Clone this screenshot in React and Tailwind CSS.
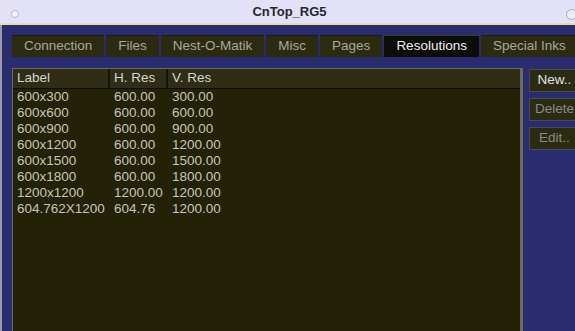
import React from "react";

const tabs = ["Connection", "Files", "Nest-O-Matik", "Misc", "Pages", "Resolutions", "Special Inks"];
const rows = [
  ["600x300", "600.00", "300.00"],
  ["600x600", "600.00", "600.00"],
  ["600x900", "600.00", "900.00"],
  ["600x1200", "600.00", "1200.00"],
  ["600x1500", "600.00", "1500.00"],
  ["600x1800", "600.00", "1800.00"],
  ["1200x1200", "1200.00", "1200.00"],
  ["604.762X1200", "604.76", "1200.00"],
];

export default function App() {
  return (
    <div
      className="w-[575px] h-[331px] overflow-hidden flex flex-col bg-[#2b2c6e]"
      style={{ fontFamily: '"Liberation Sans", Arial, sans-serif' }}
    >
      {/* title bar */}
      <div className="relative h-[23px] shrink-0 bg-[#e3e1f7] flex items-center justify-center">
        <div className="absolute left-[11px] top-[10px] w-[8px] h-[8px] rounded-full bg-[#f4f4f8] border border-[#b8b8c8]" />
        <span className="text-[13px] font-bold text-[#26262e] pl-[4px]">CnTop_RG5</span>
        <div className="absolute left-[566px] top-[9px] w-[11px] h-[11px] rounded-full bg-[#ececf4] border border-[#a8a8b8]" />
      </div>
      <div className="h-[2px] shrink-0 bg-[#e2deb0]" />
      <div className="flex-1 flex border-l-2 border-[#9a9aaa] min-h-0">
        <div className="flex-1 flex flex-col pl-[10px] pt-[10px] min-w-0">
          {/* tabs */}
          <div className="flex gap-[2px] h-[22px] shrink-0 text-[13.5px] whitespace-nowrap">
            {tabs.map((t) => (
              <div
                key={t}
                className={
                  t === "Resolutions"
                    ? "px-[12px] flex items-center bg-[#0c0c08] text-[#f0f0f0] border-t border-[#3a3a30]"
                    : "px-[12px] flex items-center bg-[#2c2b12] text-[#a9a89c] border-t border-[#1a1a10]"
                }
              >
                {t}
              </div>
            ))}
          </div>
          {/* content */}
          <div className="flex mt-[11px] flex-1 min-h-0">
            <div className="w-[511px] shrink-0 border border-[#6a6a62] border-r-[3px] border-b-0 bg-[#232106] text-[13.5px] text-[#c6c6bc]">
              <div className="flex h-[20px] bg-[#2f2d15] border-b border-[#0e0e06] text-[#d6d6d0] items-center">
                <div className="w-[97px] pl-[4px] border-r-2 border-[#121208] h-full flex items-center">Label</div>
                <div className="w-[58px] pl-[4px] border-r-2 border-[#121208] h-full flex items-center">H. Res</div>
                <div className="flex-1 pl-[4px] h-full flex items-center">V. Res</div>
              </div>
              <div>
                {rows.map((r) => (
                  <div key={r[0]} className="flex h-[16px] leading-[16px] whitespace-nowrap">
                    <div className="w-[97px] pl-[4px]">{r[0]}</div>
                    <div className="w-[58px] pl-[4px]">{r[1]}</div>
                    <div className="flex-1 pl-[4px]">{r[2]}</div>
                  </div>
                ))}
              </div>
            </div>
            <div className="ml-[6px] mt-[1px] flex flex-col gap-[6px] text-[13.5px] shrink-0">
              <div className="w-[51px] h-[23px] flex items-center justify-center bg-[#2b2a12] border border-[#4a4a50] text-[#e4e4e0]">New..</div>
              <div className="w-[51px] h-[23px] flex items-center justify-center bg-[#2b2a12] border border-[#4a4a50] text-[#8a8a84]">Delete</div>
              <div className="w-[51px] h-[23px] flex items-center justify-center bg-[#2b2a12] border border-[#4a4a50] text-[#8a8a84]">Edit..</div>
            </div>
          </div>
        </div>
      </div>
    </div>
  );
}
